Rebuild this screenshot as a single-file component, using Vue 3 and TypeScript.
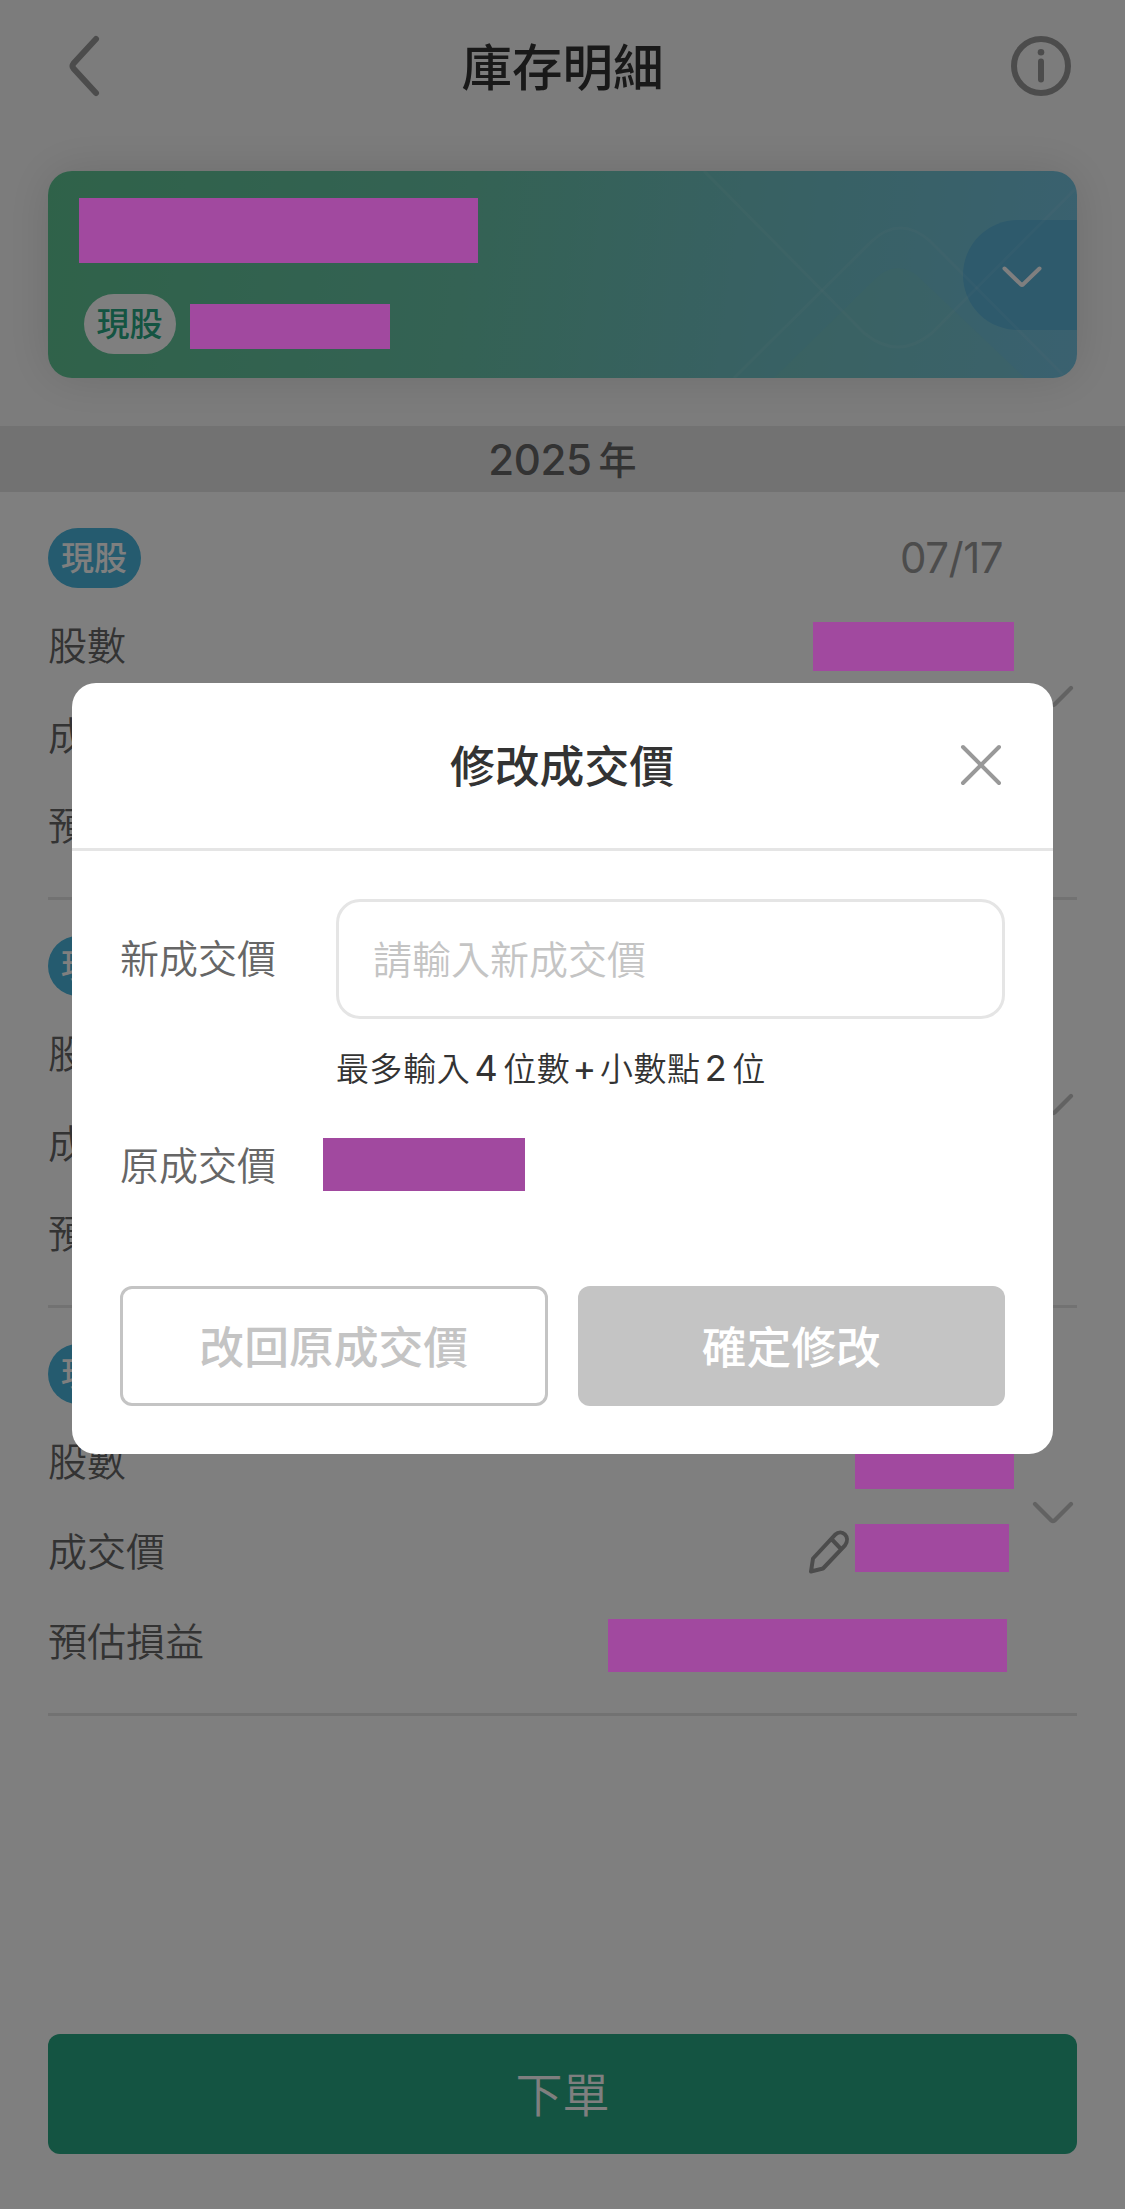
<script setup lang="ts">
interface Mask {
  w: number
  h: number
  top: number
  right: number
}

interface Row {
  label: string
  editable?: boolean
  mask: Mask
}

interface Holding {
  id: number
  kind: string
  date: string
  rows: Row[]
}

const buildRows = (sharesWidth: number, sharesTop: number): Row[] => [
  { label: '股數', mask: { w: sharesWidth, h: 49, top: sharesTop, right: 15 } },
  { label: '成交價', editable: true, mask: { w: 154, h: 48, top: 18, right: 20 } },
  { label: '預估損益', mask: { w: 399, h: 53, top: 23, right: 22 } },
]

const holdings: Holding[] = [
  { id: 1, kind: '現股', date: '07/17', rows: buildRows(201, 22) },
  { id: 2, kind: '現股', date: '07/17', rows: buildRows(201, 22) },
  { id: 3, kind: '現股', date: '07/17', rows: buildRows(159, 24) },
]

const maskStyle = (m: Mask) => ({
  width: `${m.w}px`,
  height: `${m.h}px`,
  marginTop: `${m.top}px`,
  marginRight: `${m.right}px`,
})
</script>

<template>
  <div class="page">
    <div class="hero">
      <header class="topbar">
        <svg class="back" width="60" height="66" viewBox="0 0 60 66" fill="none">
          <path d="M42 6 L19.500 30.500 Q17.500 33 19.500 35.500 L42 60" stroke="#999" stroke-width="6" stroke-linecap="round" />
        </svg>
        <h1 class="title">庫存明細</h1>
        <svg class="info" width="60" height="60" viewBox="0 0 60 60" fill="none">
          <circle cx="30" cy="30" r="27" stroke="#999" stroke-width="6" />
          <circle cx="30" cy="16.300" r="3.300" fill="#999" />
          <path d="M30 25.500 V43.500" stroke="#999" stroke-width="6" stroke-linecap="round" />
        </svg>
      </header>

      <section class="card">
        <svg class="pattern" width="1029" height="207" viewBox="0 0 1029 207" fill="none">
          <path d="M726 207 L823 112 Q850 82 877 112 L977 207 Z" fill="#8fd8a0" fill-opacity=".1" />
          <path d="M656 0 L816 162 Q850 190 884 162 L1029 16" stroke="#fff" stroke-opacity=".06" stroke-width="3" />
          <path d="M686 207 L824 70 Q852 44 882 70 L1015 204" stroke="#fff" stroke-opacity=".06" stroke-width="3" />
        </svg>
        <div class="card-main">
          <span class="mask mask-name"></span>
          <div class="card-sub">
            <span class="pill pill-light">現股</span>
            <span class="mask mask-code"></span>
          </div>
        </div>
        <div class="card-toggle">
          <svg width="42" height="24" viewBox="0 0 42 24" fill="none">
            <path d="M3.500 4.500 L20 20.500 Q21 21.200 22 20.500 L38.500 4.500" stroke="#fff" stroke-width="4" stroke-linecap="round" />
          </svg>
        </div>
      </section>
    </div>

    <div class="year"><span class="year-num">2025</span><span class="year-unit">年</span></div>

    <ul class="list">
      <li v-for="item in holdings" :key="item.id" class="item">
        <div class="item-body">
          <div class="item-head">
            <span class="pill pill-blue">{{ item.kind }}</span>
            <span class="date">{{ item.date }}</span>
          </div>
          <div v-for="row in item.rows" :key="row.label" class="row">
            <span class="row-label">{{ row.label }}</span>
            <div class="row-value">
              <svg v-if="row.editable" class="pencil" width="42" height="46" viewBox="0 0 42 46" fill="none">
                <path
                  d="M3 42.500 L5 29.500 L27 5.800 C34 -1 43 8 37 16.300 L15 39.500 Z M23.500 10 L32.500 19.500"
                  stroke="#999" stroke-width="4" stroke-linejoin="round"
                />
              </svg>
              <span class="mask" :style="maskStyle(row.mask)"></span>
            </div>
          </div>
        </div>
        <svg class="chev" width="48" height="24" viewBox="0 0 48 24" fill="none">
          <path d="M6 4 L22.500 20.500 Q24 21.500 25.500 20.500 L42 4" stroke="#c4c4c4" stroke-width="4.200" stroke-linecap="round" />
        </svg>
      </li>
    </ul>

    <footer class="footer">
      <button class="order" type="button">下單</button>
    </footer>

    <div class="overlay"></div>

    <div class="modal" role="dialog">
      <div class="modal-head">
        <h2 class="modal-title">修改成交價</h2>
        <svg class="close" width="42" height="42" viewBox="0 0 42 42" fill="none">
          <path d="M3 3 L39 39 M39 3 L3 39" stroke="#999" stroke-width="4" stroke-linecap="round" />
        </svg>
      </div>
      <div class="modal-body">
        <div class="field">
          <label class="label" for="new-price">新成交價</label>
          <input id="new-price" class="input" type="text" placeholder="請輸入新成交價" />
        </div>
        <p class="hint">最多輸入<span class="lat">4</span>位數<span class="lat plus">+</span>小數點<span class="lat">2</span>位</p>
        <div class="origin">
          <span class="label label-origin">原成交價</span>
          <span class="mask mask-origin"></span>
        </div>
        <div class="actions">
          <button class="btn btn-line" type="button">改回原成交價</button>
          <button class="btn btn-fill" type="button">確定修改</button>
        </div>
      </div>
    </div>
  </div>
</template>

<style>
body {
  margin: 0;
  background: #fff;
}
</style>

<style scoped>
.page {
  position: relative;
  box-sizing: border-box;
  width: 1125px;
  height: 2209px;
  overflow: hidden;
  display: flex;
  flex-direction: column;
  background: #fff;
  font-family: Inter, "Noto Sans CJK TC", sans-serif;
  font-weight: 350;
  color: #666;
}

.hero {
  flex: none;
  height: 426px;
  background: #f9f9f9;
}

.topbar {
  display: flex;
  align-items: center;
  justify-content: space-between;
  height: 132px;
  padding: 0 54px;
}

.title {
  margin: 4px 0 0;
  font-size: 50.500px;
  line-height: 60px;
  font-weight: 500;
  color: #333;
}

.card {
  position: relative;
  display: flex;
  justify-content: space-between;
  width: 1029px;
  height: 207px;
  margin: 39px 48px 0;
  border-radius: 24px;
  overflow: hidden;
  background: linear-gradient(98deg, #5fc493 0%, #68c4a8 40%, #70c3c4 66%, #74c2e0 100%);
  box-shadow: 0 0 48px rgba(0, 0, 0, 0.12);
}

.pattern {
  position: absolute;
  inset: 0;
}

.card-main {
  display: flex;
  flex-direction: column;
  padding: 27px 0 0 31px;
}

.card-sub {
  display: flex;
  align-items: center;
  gap: 14px;
  margin: 31px 0 0 5px;
}

.card-toggle {
  display: flex;
  align-items: center;
  justify-content: center;
  align-self: center;
  box-sizing: border-box;
  width: 114px;
  height: 110px;
  padding: 2px 0 0 3px;
  margin-top: 1px;
  border-radius: 55px 0 0 55px;
  background: #5cb4d8;
}

.mask {
  position: relative;
  z-index: 2;
  flex: none;
  display: block;
  background: #a1499f;
}

.mask-name {
  width: 399px;
  height: 65px;
}

.mask-code {
  width: 200px;
  height: 45px;
  margin-top: 5px;
}

.mask-origin {
  width: 202px;
  height: 53px;
  margin-left: 47px;
}

.pill {
  box-sizing: border-box;
  width: 93px;
  height: 60px;
  padding-right: 1px;
  border-radius: 30px;
  text-align: center;
  font-size: 33px;
  line-height: 60px;
  font-weight: 500;
}

.pill-light {
  width: 92px;
  background: #fff;
  color: #28a884;
}

.pill-blue {
  background: #4ab6de;
  color: #fff;
}

.year {
  flex: none;
  position: relative;
  display: flex;
  align-items: center;
  justify-content: center;
  gap: 7px;
  height: 66px;
  background: #e5e5e5;
  font-weight: 500;
}

.year-num {
  font-size: 42px;
  font-weight: 450;
  letter-spacing: -0.4px;
}

.year-unit {
  margin-top: -4px;
  font-size: 38px;
}

.list {
  flex: none;
  position: relative;
  margin: 0;
  padding: 0 48px;
  list-style: none;
  background: #fff;
}

.item {
  display: flex;
  align-items: center;
  box-sizing: border-box;
  height: 408px;
  border-bottom: 3px solid #e5e5e5;
}

.item-body {
  flex: 1;
  height: 333px;
}

.item-head {
  display: flex;
  align-items: center;
  justify-content: space-between;
  height: 60px;
  margin-bottom: 12px;
}

.date {
  margin: -1px 26px 0 0;
  font-size: 42px;
  font-weight: 400;
  letter-spacing: -0.5px;
  color: #999;
}

.row {
  display: flex;
  justify-content: space-between;
  height: 90px;
}

.row-label {
  font-size: 39px;
  line-height: 91px;
}

.row-value {
  display: flex;
  align-items: flex-start;
}

.pencil {
  margin: 23px 5px 0 0;
}

.chev {
  margin-top: 2px;
}

.footer {
  margin-top: auto;
  padding: 0 48px 55px;
  background: #fff;
  display: flex;
}

.order {
  flex: 1;
  height: 120px;
  padding: 0 0 5px;
  border: 0;
  border-radius: 12px;
  background: #28a884;
  color: #fff;
  font: 350 47px "Noto Sans CJK TC", sans-serif;
}

.overlay {
  position: absolute;
  inset: 0;
  z-index: 1;
  background: rgba(0, 0, 0, 0.5);
}

.modal {
  position: absolute;
  z-index: 3;
  top: 683px;
  left: 72px;
  width: 981px;
  height: 771px;
  border-radius: 24px;
  background: #fff;
}

.modal-head {
  display: flex;
  align-items: center;
  box-sizing: border-box;
  height: 168px;
  padding: 0 51px 0 92px;
  border-bottom: 3px solid #e5e5e5;
}

.modal-title {
  flex: 1;
  margin: 2px 0 0;
  text-align: center;
  font-size: 44.8px;
  line-height: 60px;
  font-weight: 500;
  color: #333;
}

.close {
  margin-top: -2px;
}

.modal-body {
  display: flex;
  flex-direction: column;
  padding: 48px 48px 0;
}

.field {
  display: flex;
  align-items: center;
  justify-content: space-between;
}

.label {
  font-size: 39px;
  line-height: 54px;
}

.label-origin {
  margin-top: 2px;
}

.input {
  box-sizing: border-box;
  width: 669px;
  height: 120px;
  padding: 0 34px;
  border: 3px solid #e5e5e5;
  border-radius: 24px;
  background: #fff;
  outline: 0;
  font: 350 39px Inter, "Noto Sans CJK TC", sans-serif;
}

.input::placeholder {
  color: #c4c4c4;
  opacity: 1;
}

.hint {
  margin: 24px 0 0 216px;
  font-size: 33px;
  line-height: 50px;
  letter-spacing: 0.6px;
  white-space: nowrap;
  color: #333;
}

.lat {
  margin: 0 5px 0 4px;
  font-size: 36px;
  font-weight: 400;
}

.plus {
  margin: 0 3px 0 2px;
}

.origin {
  display: flex;
  align-items: center;
  height: 53px;
  margin-top: 44px;
}

.actions {
  display: grid;
  grid-template-columns: 1fr 1fr;
  gap: 30px;
  margin-top: 95px;
}

.btn {
  box-sizing: border-box;
  height: 120px;
  padding: 0 0 3px;
  border-radius: 12px;
  font: 500 44.800px "Noto Sans CJK TC", sans-serif;
}

.btn-line {
  border: 3px solid #c4c4c4;
  background: #fff;
  color: #c4c4c4;
}

.btn-fill {
  border: 0;
  background: #c4c4c4;
  color: #fff;
}
</style>
